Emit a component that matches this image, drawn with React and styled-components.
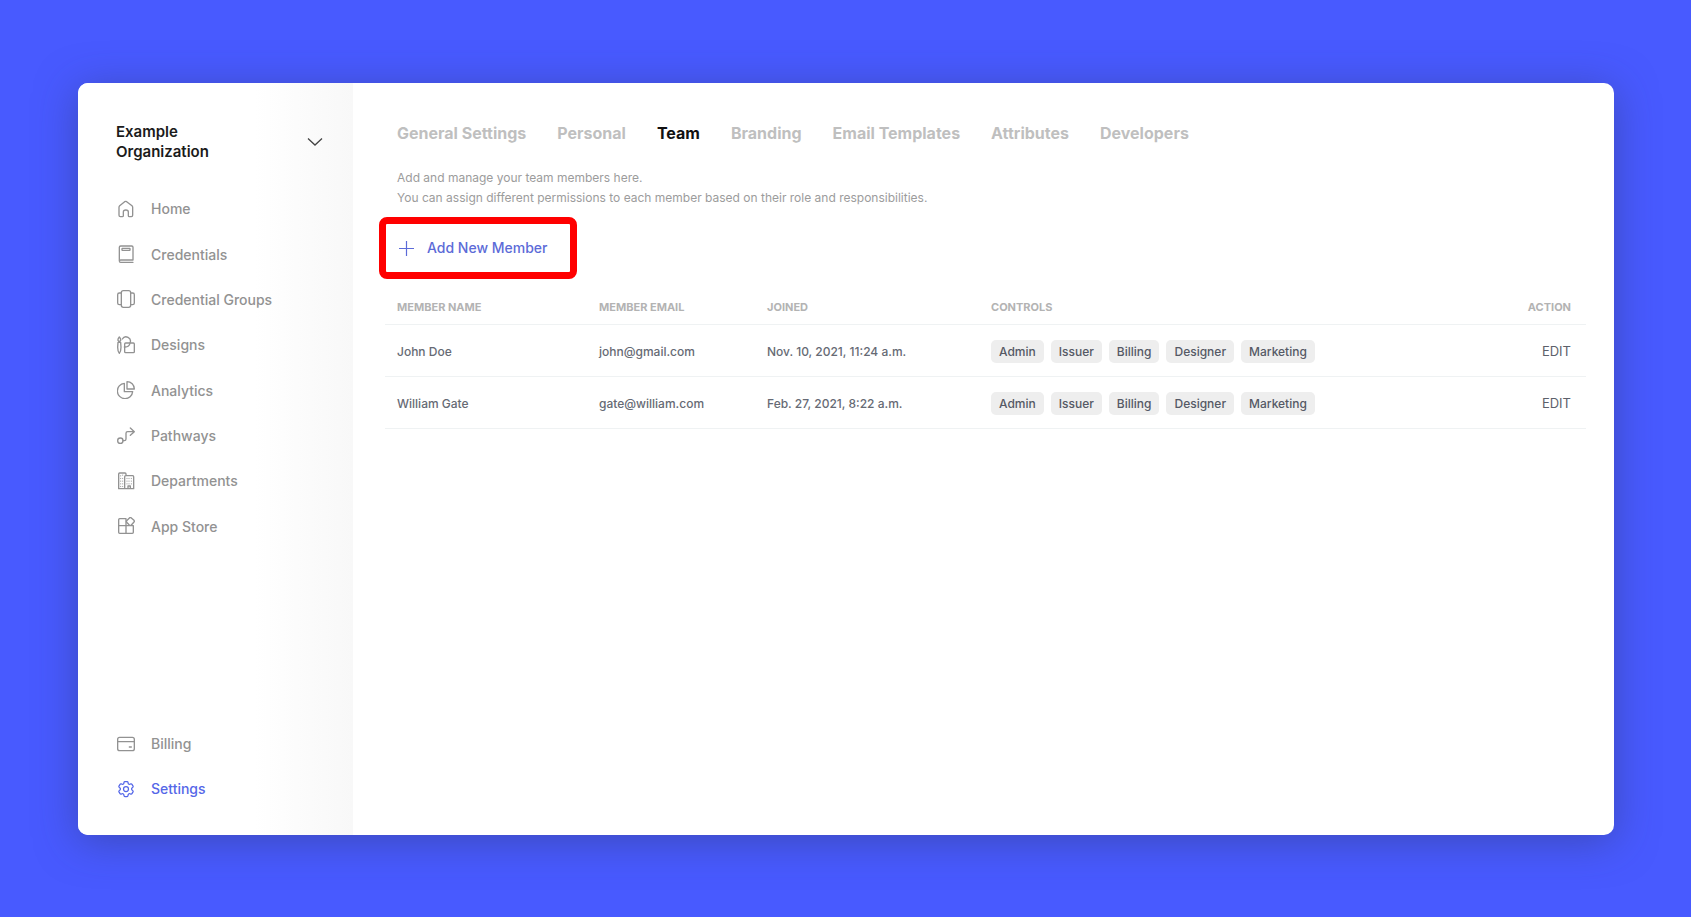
import React from 'react'
import styled, { createGlobalStyle } from 'styled-components'
import { HiOutlineCog6Tooth } from 'react-icons/hi2'

const GlobalStyle = createGlobalStyle`
*{
    box-sizing: border-box;
}

body{
    margin: 0;
    background: #485aff;
    font-family: Inter, "Liberation Sans", sans-serif;
}
`;

const Page = styled.div`
display: flex;
min-height: 100vh;
padding: 83px 77px 82px 78px;
`;

const Card = styled.div`
display: flex;
flex: 1;
min-width: 0;
background: #fff;
border-radius: 10px;
overflow: hidden;
box-shadow: 0 6px 40px rgba(48, 58, 120, 0.5);
`;

const Sidebar = styled.aside`
display: flex;
flex-direction: column;
flex: 0 0 275px;
padding: 39px 30px 24px 38px;
background: linear-gradient(to right, #fff 64%, #f8f8f8);
`;

const OrgButton = styled.button`
display: flex;
align-items: center;
justify-content: space-between;
margin-bottom: 24px;
padding: 0;
border: 0;
background: none;
color: #1b1b1b;
font: 600 15px/20px Inter, sans-serif;
text-align: left;
`;

const OrgName = styled.span`
width: 120px;
`;

const NavList = styled.nav`
display: grid;
grid-auto-rows: 1fr;
height: ${props => props.$height};
margin-top: ${props => props.$bottom ? 'auto' : '0'};
`;

const NavLink = styled.a`
display: flex;
align-items: center;
gap: 16px;
color: ${props => props.$active ? '#5567e8' : '#929292'};
font-size: 14px;
font-weight: 500;
text-decoration: none;
`;

const Icon = styled.svg`
width: 18px;
height: 18px;
margin-left: 1px;
fill: none;
stroke: currentColor;
stroke-width: 4;
stroke-linecap: round;
stroke-linejoin: round;
`;

const GearIcon = styled(HiOutlineCog6Tooth)`
width: 20px;
height: 20px;
margin-right: -1px;
`;

const Main = styled.main`
flex: 1;
min-width: 0;
padding: 38px 28px 38px 26px;
`;

const Tabs = styled.nav`
display: flex;
gap: 31px;
padding-left: 18px;
`;

const Tab = styled.a`
color: ${props => props.$active ? '#111' : '#bfbfbf'};
font-size: 16px;
font-weight: 700;
line-height: 24px;
text-decoration: none;
`;

const Intro = styled.p`
margin: 23px 0 9px;
padding-left: 18px;
color: #9c9c9c;
font-size: 12px;
line-height: 20px;
`;

const Highlight = styled.div`
width: fit-content;
border: 7px solid #ff0000;
border-radius: 8px;
`;

const AddButton = styled.button`
display: flex;
align-items: center;
gap: 12px;
height: 48px;
padding: 0 22px 0 12px;
border: 0;
background: none;
color: #5c6bd8;
font: 500 14px/20px Inter, sans-serif;
`;

const Table = styled.table`
width: calc(100% - 6px);
margin: 8px 0 0 6px;
border-collapse: collapse;
table-layout: fixed;
color: #666a74;
font-size: 12px;
font-weight: 500;
`;

const HeadCell = styled.th`
width: ${props => props.$width || 'auto'};
height: 37px;
padding: 3px 15px 0 12px;
border-bottom: 1px solid #eff2f3;
color: #b3b3b3;
font-size: 11px;
font-weight: 700;
text-align: ${props => props.$right ? 'right' : 'left'};
`;

const Cell = styled.td`
height: 52px;
padding: 2px 15px 0 12px;
border-bottom: 1px solid #eff2f3;
text-align: ${props => props.$right ? 'right' : 'left'};
white-space: nowrap;
`;

const Badges = styled.div`
display: flex;
gap: 7px;
`;

const Badge = styled.span`
padding: 0 8px;
border-radius: 5px;
background: #eee;
color: #555965;
font-size: 12px;
font-weight: 500;
line-height: 23px;
`;

const EditButton = styled.button`
padding: 0;
border: 0;
background: none;
color: #5d616b;
font: 400 13px/20px Inter, sans-serif;
`;

const icons = {
    home: <path d="M6 22Q6 19 8 17L23 5Q26 3 29 5L45 17Q47 19 47 22V46Q47 50 43 50H37Q34 50 34 47V36Q34 30 26.5 30Q19 30 19 36V47Q19 50 16 50H10Q6 50 6 46Z" />,
    credentials: (
        <>
            <path d="M48 52H11Q7 52 7 48V7Q7 3 11 3H44Q48 3 48 7V45H11Q7 45 7 48" />
            <rect x="15" y="10" width="24" height="6" rx="1" />
        </>
    ),
    groups: (
        <>
            <rect x="13" y="2" width="28" height="50" rx="6" />
            <path d="M13 9H7Q2 9 2 14V39Q2 44 7 44H13M41 9H47Q52 9 52 14V39Q52 44 47 44H41" />
        </>
    ),
    designs: (
        <>
            <path d="M7 3Q12 9 11 13Q9 16 7 16Q5 16 3 13Q2 9 7 3ZM3 19H11L12 34Q12 46 7 52Q2 46 2 34Z" />
            <path d="M16 9A13 13 0 0 1 39 21Q37 34 22 33" />
            <rect x="23" y="21" width="29" height="29" rx="3" />
        </>
    ),
    analytics: (
        <>
            <path d="M22 7A23 23 0 1 0 47 32H22Z" />
            <path d="M30 2V24H52A22 22 0 0 0 30 2Z" />
        </>
    ),
    pathways: (
        <>
            <circle cx="10" cy="41" r="8" />
            <path d="M18 41H22Q27 41 27 36V19Q27 14 32 14H51M40 3L52 14L40 25" />
        </>
    ),
    departments: (
        <>
            <path d="M24 50H5V6Q5 3 8 3H24Q27 3 27 6V11M23 50V14Q23 11 26 11H47Q50 11 50 14V50ZM33 50V42H40V50" />
            <path strokeWidth="2.6" d="M11 11V12M17 9V10M11 19V20M17 19V20M11 27V28M17 27V28M11 35V36M17 35V36M11 43V44M17 43V44M30 19V20M36 19V20M43 19V20M30 27V28M36 27V28M43 27V28M30 35V36M36 35V36M43 35V36" />
        </>
    ),
    store: (
        <>
            <path d="M27 26V5H8Q5 5 5 8V46Q5 49 8 49H46Q49 49 49 46V26H5M27 26V49" />
            <path fill="#fff" d="M38 2Q40 1 42 2L51 10Q53 13 51 15L43 24Q40 26 37 24L29 16Q28 13 29 11Z" />
        </>
    ),
    billing: (
        <>
            <rect x="2" y="7" width="50" height="40" rx="6" />
            <path d="M2 20H52M37 36H43" />
        </>
    )
}

const mainNav = [
    { icon: 'home', name: 'Home' },
    { icon: 'credentials', name: 'Credentials' },
    { icon: 'groups', name: 'Credential Groups' },
    { icon: 'designs', name: 'Designs' },
    { icon: 'analytics', name: 'Analytics' },
    { icon: 'pathways', name: 'Pathways' },
    { icon: 'departments', name: 'Departments' },
    { icon: 'store', name: 'App Store' }
]

const tabs = ['General Settings', 'Personal', 'Team', 'Branding', 'Email Templates', 'Attributes', 'Developers']

const roles = ['Admin', 'Issuer', 'Billing', 'Designer', 'Marketing']

const members = [
    { name: 'John Doe', email: 'john@gmail.com', joined: 'Nov. 10, 2021, 11:24 a.m.' },
    { name: 'William Gate', email: 'gate@william.com', joined: 'Feb. 27, 2021, 8:22 a.m.' }
]

const NavIcon = ({ name }) => (
    <Icon viewBox="0 0 54 54" aria-hidden="true">{icons[name]}</Icon>
)

const SideNav = () => {
    return (
        <Sidebar>
            <OrgButton>
                <OrgName>Example Organization</OrgName>
                <svg width="16" height="10" viewBox="0 0 16 10" fill="none" stroke="#444" strokeWidth="1.3" aria-hidden="true">
                    <path d="M1 1.5L8 8L15 1.5" />
                </svg>
            </OrgButton>
            <NavList $height="363px">
                {mainNav.map(item => (
                    <NavLink key={item.name} href="#">
                        <NavIcon name={item.icon} />
                        {item.name}
                    </NavLink>
                ))}
            </NavList>
            <NavList $height="90px" $bottom>
                <NavLink href="#">
                    <NavIcon name="billing" />
                    Billing
                </NavLink>
                <NavLink href="#" $active>
                    <GearIcon />
                    Settings
                </NavLink>
            </NavList>
        </Sidebar>
    )
}

const MemberTable = () => {
    return (
        <Table>
            <thead>
                <tr>
                    <HeadCell $width="202px">MEMBER NAME</HeadCell>
                    <HeadCell $width="168px">MEMBER EMAIL</HeadCell>
                    <HeadCell $width="224px">JOINED</HeadCell>
                    <HeadCell>CONTROLS</HeadCell>
                    <HeadCell $width="100px" $right>ACTION</HeadCell>
                </tr>
            </thead>
            <tbody>
                {members.map(member => (
                    <tr key={member.email}>
                        <Cell>{member.name}</Cell>
                        <Cell>{member.email}</Cell>
                        <Cell>{member.joined}</Cell>
                        <Cell>
                            <Badges>
                                {roles.map(role => <Badge key={role}>{role}</Badge>)}
                            </Badges>
                        </Cell>
                        <Cell $right><EditButton>EDIT</EditButton></Cell>
                    </tr>
                ))}
            </tbody>
        </Table>
    )
}

const App = () => {
    return (
        <>
            <GlobalStyle />
            <Page>
                <Card>
                    <SideNav />
                    <Main>
                        <Tabs>
                            {tabs.map(tab => (
                                <Tab key={tab} href="#" $active={tab === 'Team'}>{tab}</Tab>
                            ))}
                        </Tabs>
                        <Intro>
                            Add and manage your team members here.<br />
                            You can assign different permissions to each member based on their role and responsibilities.
                        </Intro>
                        <Highlight>
                            <AddButton>
                                <svg width="17" height="17" viewBox="0 0 17 17" fill="none" stroke="currentColor" strokeWidth="1.2" aria-hidden="true">
                                    <path d="M8.5 1V16M1 8.5H16" />
                                </svg>
                                Add New Member
                            </AddButton>
                        </Highlight>
                        <MemberTable />
                    </Main>
                </Card>
            </Page>
        </>
    )
}

export default App
